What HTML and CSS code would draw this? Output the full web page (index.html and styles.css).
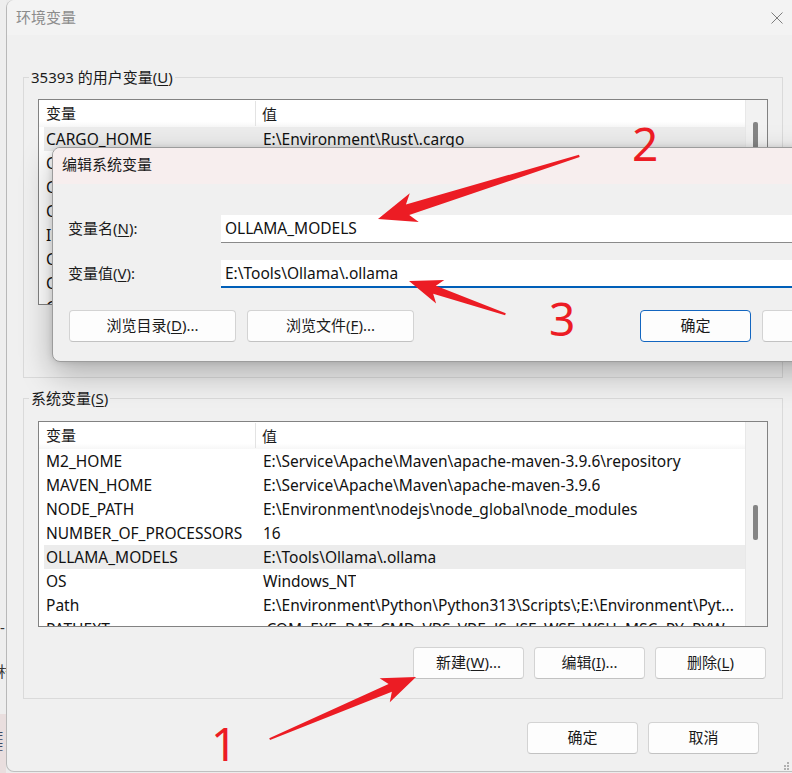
FILE: index.html
```html
<!DOCTYPE html>
<html lang="zh-CN">
<head>
<meta charset="utf-8">
<title>环境变量</title>
<link rel="stylesheet" href="styles.css">
</head>
<body>
<div class="side">
  <span class="side-dash">-</span>
  <span class="side-char">村</span>
  <div class="side-pink"><span>E</span><span>E</span></div>
</div>
<div class="window">
  <div class="titlebar">
    <span class="title">环境变量</span>
    <svg class="close" width="12" height="12" viewBox="0 0 12 12"><path d="M0.5 0.5L11.5 11.5M11.5 0.5L0.5 11.5" stroke="#7d7d7d" stroke-width="1"/></svg>
  </div>
  <div class="content">
    <fieldset class="group">
      <legend>35393 的用户变量(<u>U</u>)</legend>
      <div class="list">
        <div class="table">
          <div class="thead"><div class="c1">变量</div><div class="c2">值</div></div>
          <div class="row sel"><div class="c1">CARGO_HOME</div><div class="c2">E:\Environment\Rust\.cargo</div></div>
          <div class="row"><div class="c1">ChocolateyInstall</div><div class="c2">C:\ProgramData\chocolatey</div></div>
          <div class="row"><div class="c1">CLion</div><div class="c2">E:\Program\CLion\bin;</div></div>
          <div class="row"><div class="c1">CUDA_PATH</div><div class="c2">E:\Environment\CUDA</div></div>
          <div class="row"><div class="c1">IntelliJ IDEA</div><div class="c2">E:\Program\IntelliJ IDEA\bin;</div></div>
          <div class="row"><div class="c1">CONDA_HOME</div><div class="c2">E:\Environment\Anaconda</div></div>
          <div class="row"><div class="c1">CUDNN_PATH</div><div class="c2">E:\Environment\CUDNN</div></div>
          <div class="row"><div class="c1">GOPATH</div><div class="c2">E:\Environment\Go</div></div>
        </div>
        <div class="scroll"><div class="thumb thumb-user"></div></div>
      </div>
      <div class="btns">
        <button class="btn">新建(<u>N</u>)...</button>
        <button class="btn">编辑(<u>E</u>)...</button>
        <button class="btn">删除(<u>D</u>)</button>
      </div>
    </fieldset>
    <fieldset class="group sys">
      <legend>系统变量(<u>S</u>)</legend>
      <div class="list">
        <div class="table">
          <div class="thead"><div class="c1">变量</div><div class="c2">值</div></div>
          <div class="row"><div class="c1">M2_HOME</div><div class="c2">E:\Service\Apache\Maven\apache-maven-3.9.6\repository</div></div>
          <div class="row"><div class="c1">MAVEN_HOME</div><div class="c2">E:\Service\Apache\Maven\apache-maven-3.9.6</div></div>
          <div class="row"><div class="c1">NODE_PATH</div><div class="c2">E:\Environment\nodejs\node_global\node_modules</div></div>
          <div class="row"><div class="c1">NUMBER_OF_PROCESSORS</div><div class="c2">16</div></div>
          <div class="row sel"><div class="c1">OLLAMA_MODELS</div><div class="c2">E:\Tools\Ollama\.ollama</div></div>
          <div class="row"><div class="c1">OS</div><div class="c2">Windows_NT</div></div>
          <div class="row"><div class="c1">Path</div><div class="c2">E:\Environment\Python\Python313\Scripts\;E:\Environment\Pyt...</div></div>
          <div class="row"><div class="c1">PATHEXT</div><div class="c2">.COM;.EXE;.BAT;.CMD;.VBS;.VBE;.JS;.JSE;.WSF;.WSH;.MSC;.PY;.PYW</div></div>
        </div>
        <div class="scroll"><div class="thumb thumb-sys"></div></div>
      </div>
      <div class="btns">
        <button class="btn">新建(<u>W</u>)...</button>
        <button class="btn">编辑(<u>I</u>)...</button>
        <button class="btn">删除(<u>L</u>)</button>
      </div>
    </fieldset>
    <div class="footer">
      <button class="btn">确定</button>
      <button class="btn">取消</button>
    </div>
  </div>
  <svg class="grip" width="7" height="8" viewBox="0 0 7 8"><rect x="4" y="0" width="2" height="2" fill="#b0b0b0"/><rect x="1" y="3" width="2" height="2" fill="#b0b0b0"/><rect x="4" y="3" width="2" height="2" fill="#b0b0b0"/><rect x="1" y="6" width="2" height="2" fill="#b0b0b0"/><rect x="4" y="6" width="2" height="2" fill="#b0b0b0"/></svg>
</div>

<div class="dialog">
  <div class="dlg-title">编辑系统变量</div>
  <div class="dlg-body">
    <div class="field">
      <label>变量名(<u>N</u>):</label>
      <div class="input">OLLAMA_MODELS</div>
    </div>
    <div class="field">
      <label>变量值(<u>V</u>):</label>
      <div class="input focus">E:\Tools\Ollama\.ollama</div>
    </div>
    <div class="dlg-btns">
      <button class="btn wide">浏览目录(<u>D</u>)...</button>
      <button class="btn wide">浏览文件(<u>F</u>)...</button>
      <span class="spacer"></span>
      <button class="btn primary">确定</button>
      <button class="btn">取消</button>
    </div>
  </div>
</div>

<svg class="marks" width="792" height="773" viewBox="0 0 792 773">
  <polygon transform="translate(378 219) rotate(162.6)" points="-211,-1.2 -31,-5.5 -38,-15 0,0 -38,15 -31,5.5 -211,1.2" fill="#ec1c24"/>
  <polygon transform="translate(409 281) rotate(-161)" points="-102,-1 -27,-4.2 -33,-12.5 0,0 -33,12.5 -27,4.2 -102,1" fill="#ec1c24"/>
  <polygon transform="translate(416 677) rotate(-23)" points="-159,-1 -28,-4.2 -34,-13 0,0 -34,13 -28,4.2 -159,1" fill="#ec1c24"/>
</svg>
<span class="num n2">2</span>
<span class="num n3">3</span>
<span class="num n1">1</span>
</body>
</html>
```
FILE: styles.css
```css
* { box-sizing: border-box; }
html, body { margin: 0; padding: 0; }
body {
  width: 792px;
  height: 773px;
  overflow: hidden;
  position: relative;
  display: flex;
  background: #ececec;
  font-family: "Noto Sans", "Noto Sans CJK SC", sans-serif;
  font-size: 15px;
  color: #1b1b1b;
}
u { text-decoration-thickness: 1px; text-underline-offset: 2px; }

/* left sliver of the window behind */
.side {
  width: 6px;
  flex: none;
  display: flex;
  flex-direction: column;
  overflow: hidden;
  background: #eeeeee;
  font-size: 15px;
  color: #333;
  line-height: 1;
}
.side-dash { margin-top: 620px; height: 14px; }
.side-char { margin-top: 30px; margin-left: -2px; height: 30px; }
.side-pink {
  margin-top: 20px;
  flex: 1;
  background: #e9dede;
  display: flex;
  flex-direction: column;
  padding-top: 16px;
  font-size: 11px;
  color: #3c4a66;
  margin-left: -3px;
}

.window {
  flex: none;
  width: 786px;
  height: 772px;
  position: relative;
  background: #f0f0f0;
  border-left: 1px solid #b8b8b8;
  border-bottom: 1px solid #c0c0c0;
  border-radius: 8px 0 0 8px;
}
.titlebar {
  height: 35px;
  display: flex;
  align-items: center;
  padding: 0 9px 2px;
  background: #f3f3f3;
  border-top-left-radius: 8px;
}
.title { color: #8c8c8c; font-size: 15px; }
.close { margin-left: auto; margin-top: 2px; }

.content { padding: 32px 0 0 16px; }
.group {
  width: 760px;
  margin: 0;
  border: 1px solid #dadada;
  padding: 12px 14px 20px;
  min-width: 0;
}
.group.sys { margin-top: 10px; padding-top: 13px; padding-bottom: 19px; }
legend {
  padding: 0 2px;
  margin-left: -9px;
  line-height: 20px;
  font-size: 15px;
}

.list {
  height: 206px;
  display: flex;
  background: #fff;
  border: 1px solid #828282;
}
.table { flex: 1; overflow: hidden; min-width: 0; }
.thead {
  height: 27px;
  display: flex;
  align-items: center;
  background: linear-gradient(#fff 80%, #f7f7f7);
}
.thead .c1 {
  width: 217px;
  flex: none;
  height: 25px;
  line-height: 25px;
  padding-left: 7px;
  border-right: 1px solid #e3e3e3;
}
.thead .c2 { padding-left: 6px; }
.row {
  height: 24px;
  line-height: 24px;
  display: flex;
  margin-left: 5px;
  white-space: nowrap;
  font-size: 15.5px;
  color: #111;
}
.row .c1 { width: 212px; flex: none; padding-left: 2px; overflow: hidden; }
.row .c2 { padding-left: 7px; overflow: hidden; }
.row.sel { background: #ececec; }
.scroll {
  width: 22px;
  flex: none;
  background: #f2f2f2;
  border-left: 1px solid #e8e8e8;
  padding-left: 7px;
}
.thumb { width: 5px; background: #858585; border-radius: 2px; }
.thumb-user { margin-top: 22px; height: 60px; }
.thumb-sys { margin-top: 83px; height: 35px; }

.btns {
  display: flex;
  justify-content: flex-end;
  gap: 10px;
  margin-top: 20px;
  padding-right: 2px;
}
.btn {
  width: 111px;
  height: 32px;
  flex: none;
  padding: 0 0 3px;
  display: flex;
  align-items: center;
  justify-content: center;
  background: #fdfdfd;
  border: 1px solid #d3d3d3;
  border-bottom-color: #c2c2c2;
  border-radius: 4px;
  font-family: inherit;
  font-size: 15px;
  color: #1b1b1b;
}
.footer {
  display: flex;
  justify-content: flex-end;
  gap: 10px;
  margin-top: 23px;
  padding-right: 33px;
}
.grip { position: absolute; right: 2px; bottom: 1px; }

/* overlaying edit dialog */
.dialog {
  position: absolute;
  left: 52px;
  top: 147px;
  width: 852px;
  height: 215px;
  background: #f0f0f0;
  border: 1px solid #9c9c9c;
  border-radius: 8px;
  box-shadow: 0 12px 32px rgba(0,0,0,0.28), 0 0 6px rgba(0,0,0,0.12);
  overflow: hidden;
}
.dlg-title {
  height: 36px;
  line-height: 33px;
  padding-left: 9px;
  background: #f7eeee;
  font-size: 15px;
}
.dlg-body { padding: 31px 30px 0 15px; }
.field {
  display: grid;
  grid-template-columns: 153px 1fr;
  align-items: center;
  height: 28px;
}
.field + .field { margin-top: 17px; }
.field label { font-size: 15px; line-height: 20px; padding-bottom: 2px; }
.input {
  height: 28px;
  background: #fff;
  border-bottom: 1px solid #8a8a8a;
  padding-left: 4px;
  line-height: 26px;
  font-size: 15.5px;
  color: #111;
}
.input.focus { border-bottom: 2px solid #005fb8; line-height: 26px; }
.dlg-btns {
  display: flex;
  gap: 11px;
  margin-top: 22px;
  padding-left: 1px;
}
.btn.wide { width: 167px; }
.spacer { flex: 1; }
.btn.primary { border: 1px solid #1366c0; }

/* annotations */
.marks { position: absolute; left: 0; top: 0; pointer-events: none; }
.num {
  position: absolute;
  font-family: "Noto Sans", sans-serif;
  font-size: 46px;
  line-height: 1;
  color: #ec1c24;
}
.n2 { left: 632px; top: 120px; }
.n3 { left: 549px; top: 295px; }
.n1 { left: 211px; top: 720px; }
```
